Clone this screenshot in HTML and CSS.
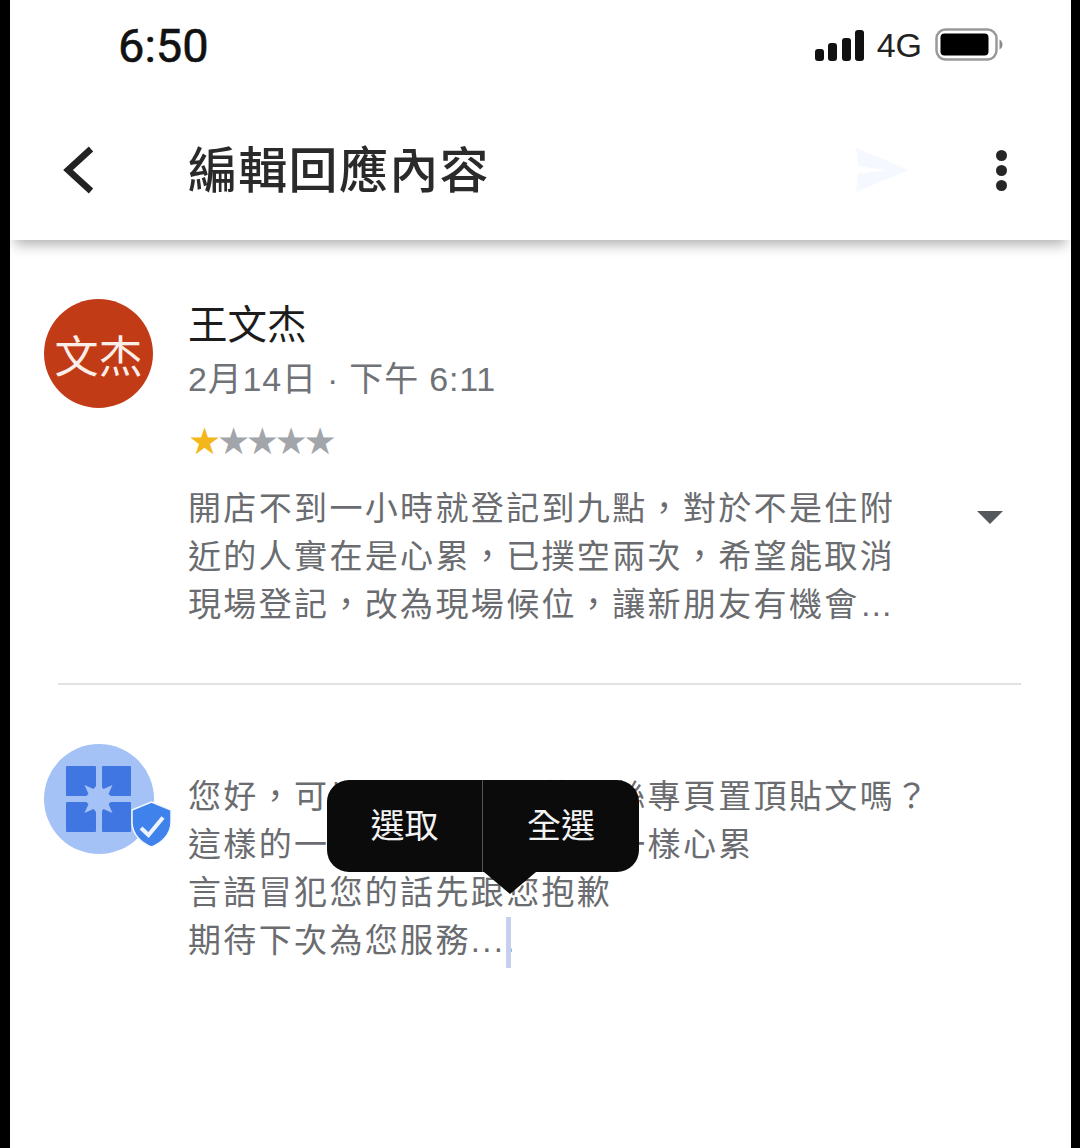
FILE: index.html
```html
<!DOCTYPE html>
<html lang="zh-Hant">
<head>
  <meta charset="UTF-8" />
  <title>編輯回應內容</title>
  <link rel="stylesheet" href="styles.css">
</head>
<body>

<div class="phone">
  <!-- Status bar -->
  <div class="status-bar">
    <span class="clock">6:50</span>
    <div class="status-icons">
      <svg class="signal" width="49" height="31" viewBox="0 0 49 31">
        <rect x="0" y="19" width="9" height="12" rx="3" />
        <rect x="13" y="13" width="9" height="18" rx="3" />
        <rect x="27" y="8" width="9" height="23" rx="3" />
        <rect x="40" y="0" width="9" height="31" rx="3" />
      </svg>
      <span class="network">4G</span>
      <svg class="battery" width="68" height="34" viewBox="0 0 68 34">
        <rect x="1.5" y="1.5" width="60" height="30" rx="9" fill="none" stroke="#999" stroke-width="2.5" />
        <rect x="5.5" y="5.5" width="48" height="22" rx="4" fill="#000" />
        <path d="M64.5 11.5c2 1 3 3 3 5s-1 4-3 5z" fill="#8a8a8a" />
      </svg>
    </div>
  </div>

  <!-- App bar -->
  <header class="app-bar">
    <svg class="back" width="34" height="50" viewBox="0 0 34 50">
      <path d="M29 4 6 25l23 21" fill="none" stroke="#222" stroke-width="6.5" />
    </svg>
    <h1>編輯回應內容</h1>
    <svg class="send" width="53" height="44" viewBox="0 0 53 44">
      <path d="M0 0 53 22 0 44 2 26 30 22 2 18z" fill="#f5f8fe" />
    </svg>
    <div class="more"><i></i><i></i><i></i></div>
  </header>

  <!-- Review -->
  <section class="review">
    <div class="avatar">文杰</div>
    <div class="review-body">
      <div class="name">王文杰</div>
      <div class="date">2月14日 · 下午 6:11</div>
      <div class="stars"><span class="on">★</span><span>★★★★</span></div>
      <div class="review-row">
        <p>開店不到一小時就登記到九點，對於不是住附近的人實在是心累，已撲空兩次，希望能取消現場登記，改為現場候位，讓新朋友有機會…</p>
        <span class="caret"></span>
      </div>
    </div>
  </section>

  <hr class="divider">

  <!-- Reply -->
  <section class="reply">
    <div class="biz-avatar">
      <svg width="128" height="110" viewBox="0 0 128 110">
        <circle cx="55" cy="55" r="55" fill="#a4c2f6" />
        <rect x="22" y="22" width="30" height="30" rx="1" fill="#3f76e2" />
        <rect x="58" y="22" width="29" height="30" rx="1" fill="#3f76e2" />
        <rect x="22" y="58" width="30" height="30" rx="1" fill="#3f76e2" />
        <rect x="58" y="58" width="29" height="30" rx="1" fill="#3f76e2" />
        <polygon points="54.5,39 59.5,45 68.5,41 64.5,50 70.5,55 64.5,60 68.5,69 59.5,65 54.5,71 49.5,65 40.5,69 44.5,60 38.5,55 44.5,50 40.5,41 49.5,45" fill="#a4c2f6" />
        <path d="M107.5 58 127 66V78C127 90 118 99 107.5 103 97 99 88 90 88 78V66z" fill="#3f82ec" stroke="#f4f8ff" stroke-width="1.5" />
        <path d="M97 84l7.5 7L119 73.500" fill="none" stroke="#eef3fd" stroke-width="4" />
      </svg>
    </div>
    <p class="reply-text">您好，可以請您看我們的粉絲專頁置頂貼文嗎？<br>這樣的一來您就不會再跟我一樣心累<br>言語冒犯您的話先跟您抱歉<br>期待下次為您服務....<span class="cursor"></span></p>

    <div class="popup">
      <span>選取</span>
      <span>全選</span>
      <b class="popup-arrow"></b>
    </div>
  </section>
</div>

</body>
</html>
```

FILE: styles.css
```css
* { box-sizing: border-box; }

body {
  margin: 0;
  width: 1080px;
  height: 1148px;
  background: #000;
  overflow: hidden;
  font-family: "Liberation Sans", "Noto Sans CJK TC", sans-serif;
}

.phone {
  margin: 0 9px 0 10px;
  height: 1148px;
  background: #fff;
}

/* status bar */
.status-bar {
  height: 90px;
  padding: 0 68px 0 108px;
  display: flex;
  justify-content: space-between;
  align-items: center;
}

.clock {
  font-size: 47px;
  font-weight: 400;
  color: #111;
  font-family: Roboto, sans-serif;
  -webkit-text-stroke: 0.6px #111;
}

.status-icons {
  display: flex;
  align-items: center;
  gap: 13px;
}

.signal { fill: #111; }

.network {
  font-size: 34px;
  color: #222;
}

/* app bar */
.app-bar {
  height: 150px;
  display: flex;
  align-items: center;
  padding: 10px 64px 0 52px;
  box-shadow: 0 10px 12px -5px rgba(0,0,0,0.3);
}

.app-bar h1 {
  margin: 0 0 8px 92px;
  font-size: 49px;
  font-weight: 500;
  color: #2a2a2a;
  letter-spacing: 1.3px;
  flex: 1;
}

.send { margin-right: 87px; }

.more i {
  display: block;
  width: 11px;
  height: 11px;
  margin: 4px 0;
  border-radius: 50%;
  background: #262626;
}

/* review */
.review {
  display: flex;
  padding: 59px 0 0 34px;
}

.avatar {
  width: 109px;
  height: 109px;
  border-radius: 50%;
  background: #c23b17;
  color: #fbeee8;
  font-size: 44px;
  display: flex;
  align-items: center;
  justify-content: center;
  flex-shrink: 0;
}

.review-body {
  margin-left: 35px;
  flex: 1;
}

.name {
  font-size: 39.500px;
  color: #1c1c1c;
  line-height: 52px;
}

.date {
  font-size: 34px;
  color: #6f7276;
  line-height: 56px;
  letter-spacing: 0.8px;
}

.stars {
  font-size: 37px;
  line-height: 36px;
  margin-top: 17px;
  letter-spacing: -4.300px;
  color: #a2a6ab;
  font-family: "DejaVu Sans", sans-serif;
}

.stars .on { color: #f3b71c; }

.review-row {
  display: flex;
  margin-top: 25px;
}

.review-row p {
  margin: 0;
  width: 713px;
  font-size: 33px;
  line-height: 48px;
  letter-spacing: 2.350px;
  color: #6a6c70;
}

.caret {
  width: 0;
  height: 0;
  margin: 26px 0 0 76px;
  border-left: 13px solid transparent;
  border-right: 13px solid transparent;
  border-top: 13px solid #55585c;
}

.divider {
  margin: 54px 50px 0 48px;
  border: 0;
  border-top: 2px solid #e0e2e4;
}

/* reply */
.reply {
  display: flex;
  padding: 59px 0 0 34px;
  position: relative;
}

.biz-avatar {
  width: 128px;
  height: 110px;
  flex-shrink: 0;
}

.reply-text {
  margin: 29px 0 0 16px;
  font-size: 33px;
  line-height: 48px;
  letter-spacing: 2.350px;
  color: #6a6c70;
  white-space: nowrap;
}

.cursor {
  position: absolute;
  width: 5px;
  height: 51px;
  margin-left: -11px;
  background: #c6cfee;
}

.popup {
  position: absolute;
  left: 317px;
  top: 95px;
  width: 312px;
  height: 92px;
  background: #0b0b0b;
  border-radius: 22px;
  display: flex;
  color: #f2f2f2;
  font-size: 34px;
}

.popup span {
  display: flex;
  align-items: center;
  justify-content: center;
  padding-bottom: 6px;
}

.popup span:first-child {
  width: 156px;
  border-right: 1px solid #555;
}

.popup span:nth-child(2) { flex: 1; }

.popup-arrow {
  position: absolute;
  left: 157px;
  top: 92px;
  width: 0;
  height: 0;
  border-left: 26px solid transparent;
  border-right: 26px solid transparent;
  border-top: 22px solid #0b0b0b;
}
```
